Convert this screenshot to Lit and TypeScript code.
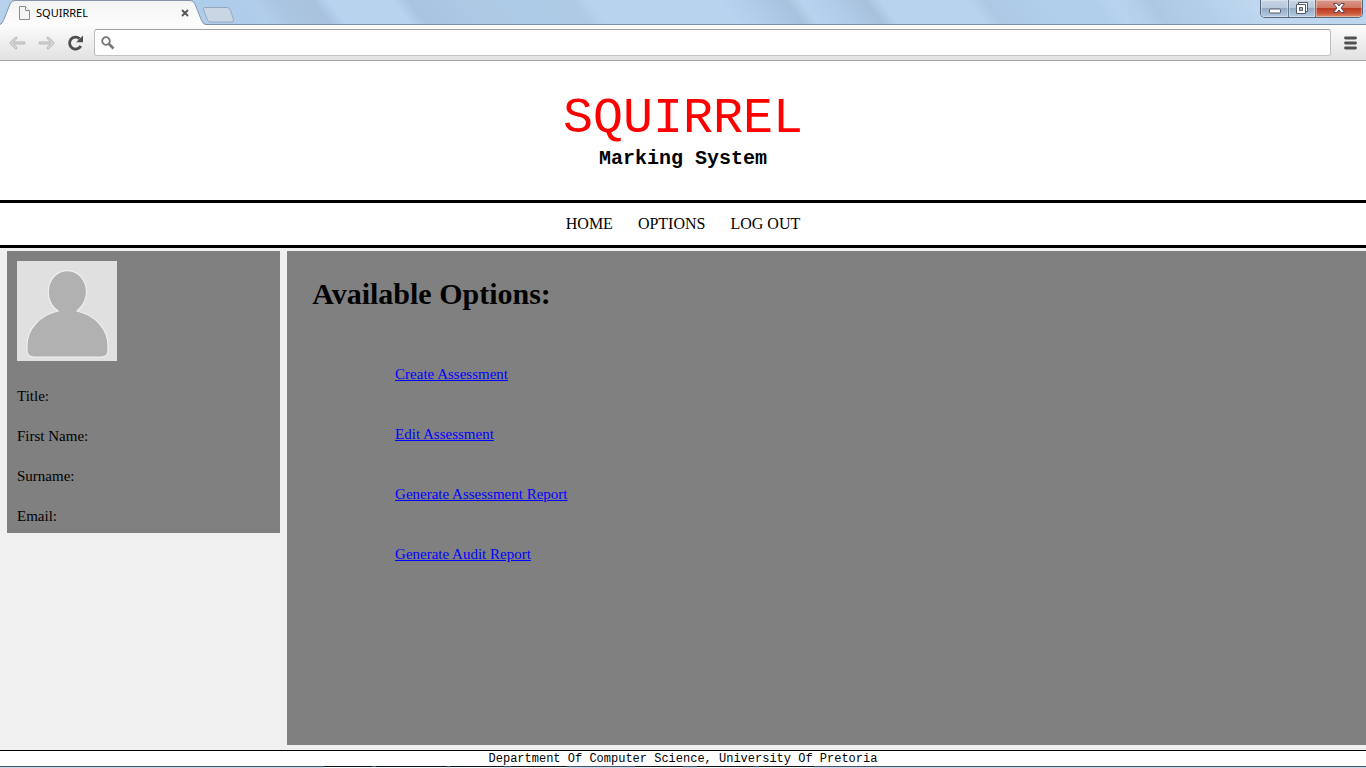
import { LitElement, html, css, svg } from "lit";
import { customElement, state } from "lit/decorators.js";

const SKY: [number, string][] = [
  [0, "#b5d1ec"], [200, "#aecdea"], [252, "#b0cdea"], [275, "#abc6e1"], [312, "#a8c2de"],
  [328, "#b7d3ee"], [392, "#b7d3ee"], [408, "#a9c4e0"], [470, "#adc9e4"], [520, "#adcbe6"],
  [572, "#aecae4"], [588, "#b7d3ee"], [720, "#b7d3ee"], [745, "#b0cdea"], [785, "#a7c2dd"],
  [800, "#b7d3ee"], [835, "#b0cbe7"], [864, "#a7c1dc"], [880, "#b7d3ee"], [968, "#b7d3ee"],
  [984, "#adc8e3"], [1040, "#afcfeb"], [1090, "#b0cfeb"], [1110, "#b7d3ee"], [1132, "#b3cfea"],
  [1148, "#adc8e3"], [1200, "#b3d0eb"], [1250, "#bfd7ef"], [1366, "#bdd6ee"],
];

@customElement("browser-chrome")
export class BrowserChrome extends LitElement {
  static styles = css`
    :host { display: block; }
    .titlebar {
      position: relative;
      display: flex;
      justify-content: space-between;
      align-items: flex-start;
      height: 25px;
      box-sizing: border-box;
      border-bottom: 1px solid #7b90ab;
      background: #b7d3ee;
    }
    .sky { position: absolute; inset: 0; width: 100%; height: 100%; }
    .tabs { position: relative; display: flex; }
    .tab {
      position: relative;
      display: flex;
      align-items: center;
      width: 206px;
      height: 25px;
      padding: 0 16px 0 18px;
      box-sizing: border-box;
      font: 12px/16px "Noto Sans", sans-serif;
      color: #000;
    }
    .shape { position: absolute; left: 0; top: 0; }
    .page-icon { position: relative; flex: none; }
    .name { position: relative; flex: 1; padding-left: 5px; font-size: 11px; }
    button { display: block; border: 0; padding: 0; margin: 0; background: none; }
    button svg { display: block; }
    .close-tab { position: relative; }
    .new-tab { margin: 4px 0 0 -4px; }
    .window-buttons { position: relative; padding-right: 3px; }
    .window-buttons .group {
      display: flex;
      height: 18px;
      box-sizing: border-box;
      border: 1px solid #566679;
      border-top: 0;
      border-radius: 0 0 5px 5px;
      overflow: hidden;
    }
    .control {
      display: flex;
      align-items: center;
      justify-content: center;
      width: 28px;
      height: 17px;
      border-right: 1px solid #66768c;
      background: linear-gradient(#c5d4e5 0, #b8c9dc 45%, #95abc5 50%, #b5cbe2 100%);
      box-shadow: inset 0 0 0 1px rgba(255, 255, 255, 0.35);
    }
    .restore { width: 27px; }
    .quit {
      width: 46px;
      border-right: 0;
      background: linear-gradient(#d99b8d 0, #cf7863 45%, #b93a22 50%, #cd5a3c 80%, #dc9275 100%);
    }
    .toolbar {
      display: flex;
      align-items: center;
      height: 36px;
      box-sizing: border-box;
      border-bottom: 1px solid #a3a4a5;
      background: linear-gradient(#fcfcfc, #e1e1e1);
      padding: 0 8px;
    }
    .nav { display: flex; gap: 11px; }
    .address {
      flex: 1;
      display: flex;
      align-items: center;
      height: 27px;
      box-sizing: border-box;
      margin: 0 12px 0 10px;
      padding-left: 6px;
      border: 1px solid #a5a5a5;
      border-color: #a0a0a0 #bdbdbd #c3c3c3 #bdbdbd;
      border-radius: 3px;
      background: #fff;
    }
    .address input {
      flex: 1;
      height: 22px;
      border: 0;
      padding: 0 6px;
      outline: 0;
      background: none;
      font: 14px "Noto Sans", sans-serif;
    }
  `;

  render() {
    return html`
      <div class="titlebar">
        <svg class="sky" aria-hidden="true">
          <defs>
            <linearGradient id="sky" gradientUnits="userSpaceOnUse" x1="0" y1="0" x2="874" y2="-656">
              ${SKY.map(([x, c]) => svg`<stop offset=${x / 1366} stop-color=${c}></stop>`)}
            </linearGradient>
          </defs>
          <rect width="100%" height="100%" fill="url(#sky)"></rect>
        </svg>
        <div class="tabs">
          <div class="tab">
            <svg class="shape" width="206" height="25" aria-hidden="true">
              <defs>
                <linearGradient id="tab" x1="0" y1="0" x2="0" y2="1">
                  <stop offset="0" stop-color="#f4f4f4"></stop><stop offset="1" stop-color="#fdfdfd"></stop>
                </linearGradient>
              </defs>
              <path d="M0 25V24.500Q2 24 3.500 20.500L10 4Q11.500 .5 15 .5H190Q193.500 .5 195 4L201.500 20.500Q203 24.500 206 24.500V25Z" fill="url(#tab)"></path>
              <path d="M0 24.500Q2 24 3.500 20.500L10 4Q11.500 .5 15 .5H190Q193.500 .5 195 4L201.500 20.500Q203 24.500 206 24.500" fill="none" stroke="#8596ab"></path>
            </svg>
            <svg class="page-icon" width="13" height="15" viewBox="0 0 13 15" aria-hidden="true">
              <path d="M1.500 1.500H7.500L11.500 5.500V14.500H1.500Z" fill="#f5f5f5" stroke="#8c8c8c"></path>
              <path d="M7.500 1.500V5.500H11.500" fill="#fff" stroke="#8c8c8c"></path>
            </svg>
            <span class="name">SQUIRREL</span>
            <button class="close-tab" aria-label="Close tab">
              <svg width="10" height="10" viewBox="0 0 10 10"><path d="M2 2L8 8M8 2L2 8" stroke="#555" stroke-width="1.800"></path></svg>
            </button>
          </div>
          <button class="new-tab" aria-label="New tab">
            <svg width="34" height="18" viewBox="0 0 34 18"><path d="M3 1.500H25Q27.500 1.500 28.500 4L31.500 13.500Q32 16 29.500 16H9Q6.500 16 5.500 14L1.500 4Q.5 1.500 3 1.500Z" fill="#c9d6e3" stroke="#94a8bf"></path></svg>
          </button>
        </div>
        <div class="window-buttons">
          <div class="group">
            <button class="control" aria-label="Minimize">
              <svg width="14" height="14" viewBox="0 0 14 14"><rect x="1.500" y="7" width="11" height="4" rx="1" fill="#fff" stroke="#555a68"></rect></svg>
            </button>
            <button class="control restore" aria-label="Restore">
              <svg width="14" height="14" viewBox="0 0 14 14">
                <path d="M3.500 .5H12.500V9.500H3.500Z" fill="#fff" stroke="#555a68"></path>
                <path d="M1.500 2.500H10.500V11.500H1.500Z" fill="#fff" stroke="#555a68"></path>
                <path d="M4.500 5.500H7.500V8.500H4.500Z" fill="#a8bad0" stroke="#555a68"></path>
              </svg>
            </button>
            <button class="control quit" aria-label="Close">
              <svg width="14" height="14" viewBox="0 0 14 14"><path d="M1.500 1.500H5L7 4L9 1.500H12.500L9.200 6L12.500 10.500H9L7 8L5 10.500H1.500L4.800 6Z" fill="#fff" stroke="#5a4a58"></path></svg>
            </button>
          </div>
        </div>
      </div>
      <div class="toolbar">
        <div class="nav">
          <button aria-label="Back">
            <svg width="18" height="18" viewBox="0 0 18 18"><path d="M8 4L3 9L8 14M3.500 9H16" fill="none" stroke="#b8b8b8" stroke-width="2.800" stroke-linecap="round"></path><path d="M8 4L3 9L8 14M3.500 9H16" fill="none" stroke="#d8d8d8" stroke-width="1.200"></path></svg>
          </button>
          <button aria-label="Forward">
            <svg width="18" height="18" viewBox="0 0 18 18"><path d="M11 4L16 9L11 14M15.500 9H3" fill="none" stroke="#b8b8b8" stroke-width="2.800" stroke-linecap="round"></path><path d="M11 4L16 9L11 14M15.500 9H3" fill="none" stroke="#d8d8d8" stroke-width="1.200"></path></svg>
          </button>
          <button aria-label="Reload">
            <svg width="18" height="18" viewBox="0 0 18 18"><path d="M14.800 12A6 6 0 1 1 13.600 4.600" fill="none" stroke="#4d4d4d" stroke-width="2.800"></path><path d="M17 1.500V8.300H10.200Z" fill="#4d4d4d"></path></svg>
          </button>
        </div>
        <label class="address">
          <svg width="14" height="14" viewBox="0 0 14 14" aria-hidden="true"><circle cx="5" cy="5" r="3.800" fill="none" stroke="#757575" stroke-width="1.800"></circle><path d="M8 8L12.500 12.500" stroke="#757575" stroke-width="2.600"></path></svg>
          <input type="text" aria-label="Address and search bar" />
        </label>
        <button aria-label="Menu">
          <svg width="15" height="14" viewBox="0 0 15 14"><path d="M2.500 2H12.500M2.500 7H12.500M2.500 12H12.500" stroke="#505050" stroke-width="2.800" stroke-linecap="round"></path></svg>
        </button>
      </div>
    `;
  }
}

@customElement("profile-panel")
export class ProfilePanel extends LitElement {
  static styles = css`
    :host { display: block; background: #808080; padding: 10px 10px 7px; }
    .avatar { display: block; }
    .fields { margin: 0; padding-top: 25px; display: grid; gap: 20px; }
    .field { margin: 0; line-height: 20px; }
  `;

  fields = ["Title:", "First Name:", "Surname:", "Email:"];

  render() {
    return html`
      <svg class="avatar" width="100" height="100" viewBox="0 0 100 100" role="img" aria-label="Profile picture">
        <rect width="100" height="100" fill="#e0e0e0"></rect>
        <path d="M41 50C34 45 31.300 38 31.300 31C31.300 18 40 9.700 50.300 9.700S69.500 18 69.500 31C69.500 38 66 45 60 50C78 54 91 68 91 84V90Q91 96 84 96H17Q10 96 10 90V84C10 68 23 54 41 50Z" fill="#b1b1b1" stroke="#f0f0f0" stroke-width="1.200"></path>
      </svg>
      <div class="fields">${this.fields.map((f) => html`<p class="field">${f}</p>`)}</div>
    `;
  }
}

@customElement("app-root")
export class AppRoot extends LitElement {
  static styles = css`
    :host {
      display: flex;
      flex-direction: column;
      min-height: 100vh;
      background: #f0f0f0;
      color: #000;
      font: 15px/20px "Liberation Serif", "Times New Roman", serif;
    }
    .banner {
      background: #fff;
      text-align: center;
      padding: 30px 0;
      font-family: "Liberation Mono", "Courier New", monospace;
    }
    .brand { margin: 0; font-size: 50px; line-height: 56px; font-weight: 400; color: #f00; }
    .tagline { margin: 0; font-size: 20px; line-height: 23px; font-weight: 700; }
    .menu {
      display: flex;
      justify-content: center;
      gap: 25px;
      padding: 11px 0;
      background: #fff;
      border: solid #000;
      border-width: 3px 0;
      font-size: 16px;
    }
    .menu a { color: #000; text-decoration: none; }
    .columns {
      flex: 1;
      display: flex;
      align-items: flex-start;
      gap: 7px;
      padding: 3px 0 5px;
    }
    profile-panel { flex: none; width: 20%; margin-left: 7px; box-sizing: border-box; }
    .content { flex: 1; align-self: stretch; background: #808080; }
    .heading { margin: 0; padding: 26px 25px 0; font-size: 30px; line-height: 34px; }
    .options {
      list-style: none;
      margin: 0;
      padding: 53px 0 0 10%;
      display: grid;
      gap: 40px;
    }
    .options a { color: #00f; }
    .footer {
      border-top: 1px solid #000;
      background: #fff;
      text-align: center;
      padding-top: 2px;
      font: 12px/13px "Liberation Mono", "Courier New", monospace;
    }
    .taskbar { display: block; width: 100%; height: 2px; }
  `;

  @state() private menu = ["HOME", "OPTIONS", "LOG OUT"];
  @state() private options = ["Create Assessment", "Edit Assessment", "Generate Assessment Report", "Generate Audit Report"];

  render() {
    return html`
      <browser-chrome></browser-chrome>
      <header class="banner">
        <h1 class="brand">SQUIRREL</h1>
        <p class="tagline">Marking System</p>
      </header>
      <nav class="menu">${this.menu.map((m) => html`<a href="#">${m}</a>`)}</nav>
      <main class="columns">
        <profile-panel></profile-panel>
        <section class="content">
          <h2 class="heading">Available Options:</h2>
          <ul class="options">${this.options.map((o) => html`<li><a href="#">${o}</a></li>`)}</ul>
        </section>
      </main>
      <footer class="footer">Department Of Computer Science, University Of Pretoria</footer>
      <svg class="taskbar" aria-hidden="true">
        <rect width="100%" height="1" fill="#445566"></rect>
        <rect y="1" width="100%" height="1" fill="#c8daec"></rect>
        <path d="M324 0H372V1H324ZM376 0H447V1H376ZM450 0H504V1H450ZM511 0H567V1H511ZM635 0H683V1H635ZM697 0H753V1H697ZM759 0H814V1H759Z" fill="#101418"></path>
        <path d="M324 1H447V2H324ZM450 1H504V2H450ZM511 1H567V2H511ZM635 1H683V2H635ZM697 1H753V2H697ZM759 1H814V2H759Z" fill="#f4f8fc"></path>
      </svg>
    `;
  }
}
